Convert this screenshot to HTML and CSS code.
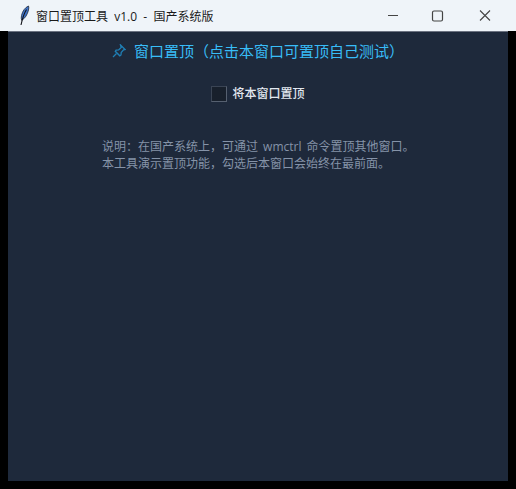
FILE: index.html
```html
<!DOCTYPE html>
<html lang="zh-CN">

<head>
    <meta charset="UTF-8">
    <title>窗口置顶工具 v1.0 - 国产系统版</title>
    <link rel="stylesheet" href="styles.css">
</head>

<body>
    <!--标题栏-->
    <div class="titlebar">
        <svg class="feather" width="14" height="24" viewBox="0 0 14 24">
            <path d="M11.500 2C8 3.500 5.500 7 4.500 11.500c-.4 2-.3 3.500.2 4.800C8 14.500 10.500 10.500 11.500 6c.4-1.600.4-3 0-4z" fill="#3f74c9" stroke="#202838" stroke-width=".8"/>
            <path d="M9.500 5.500C7 9.500 5.500 14 4 21" fill="none" stroke="#14141a" stroke-width="1.100"/>
        </svg>
        <span class="title">窗口置顶工具&nbsp; v1.0 &nbsp;-&nbsp; 国产系统版</span>
        <div class="controls">
            <svg width="46" height="31" viewBox="0 0 46 31">
                <path d="M18 15.500h10" stroke="#444" stroke-width="1"/>
            </svg>
            <svg width="46" height="31" viewBox="0 0 46 31">
                <rect x="16.500" y="11" width="10" height="10" rx="1.500" fill="none" stroke="#444" stroke-width="1.200"/>
            </svg>
            <svg width="46" height="31" viewBox="0 0 46 31">
                <path d="M18 10.500l10 10M28 10.500l-10 10" stroke="#444" stroke-width="1.100"/>
            </svg>
        </div>
    </div>

    <!--窗口内容-->
    <div class="window">
        <h1 class="heading">
            <svg class="pin" width="14" height="14" viewBox="0 0 14 14">
                <path d="M8.500 1l4.500 4.500-1.500.4-2.300 2.600-.2 2.500-1.200.8-4.500-4.500.8-1.200 2.500-.2 2.600-2.300z" fill="none" stroke="#1f7fb5" stroke-width="1.300"/>
                <path d="M4.500 9.500L1 13" stroke="#1f7fb5" stroke-width="1.300"/>
            </svg>
            <span>窗口置顶（点击本窗口可置顶自己测试）</span>
        </h1>
        <label class="check-row">
            <span class="checkbox"></span>
            <span>将本窗口置顶</span>
        </label>
        <p class="note">说明：在国产系统上，可通过 wmctrl 命令置顶其他窗口。<br>本工具演示置顶功能，勾选后本窗口会始终在最前面。</p>
    </div>
</body>

</html>
```

FILE: styles.css
```css
html,
body {
    margin: 0;
    height: 100%;
    overflow: hidden;
}

body {
    background-color: #000;
    font-family: "Open Sans", "Noto Sans CJK SC", sans-serif;
    text-spacing-trim: space-all;
}

.titlebar {
    display: flex;
    align-items: center;
    height: 31px;
    background-color: #eff4f9;
    color: #1a1a1a;
    font-size: 12px;
}

.feather {
    margin-left: 17px;
    margin-right: 5px;
}

.title {
    white-space: pre;
}

.controls {
    display: flex;
    margin-left: auto;
    margin-right: 8px;
}

.window {
    display: flex;
    flex-direction: column;
    align-items: center;
    height: 450px;
    margin: 0 8px;
    background-color: #1e293b;
    border-top: 1px solid #6b7280;
    box-sizing: border-box;
}

.heading {
    display: flex;
    align-items: center;
    gap: 8px;
    margin: 8px 0 0;
    font-size: 15px;
    font-weight: 400;
    line-height: 22px;
    color: #38bdf8;
}

.check-row {
    display: flex;
    align-items: center;
    gap: 5px;
    margin-top: 24px;
    font-size: 12px;
    font-weight: 500;
    line-height: 16px;
    color: #e2e8f0;
}

.checkbox {
    width: 14px;
    height: 14px;
    background-color: #18202c;
    border: 1px solid #566070;
    border-top-color: #3a4454;
    border-left-color: #3a4454;
}

.note {
    align-self: flex-start;
    margin: 36px 0 0 94px;
    font-size: 12px;
    word-spacing: 2px;
    line-height: 17px;
    color: #8593a8;
}
```
